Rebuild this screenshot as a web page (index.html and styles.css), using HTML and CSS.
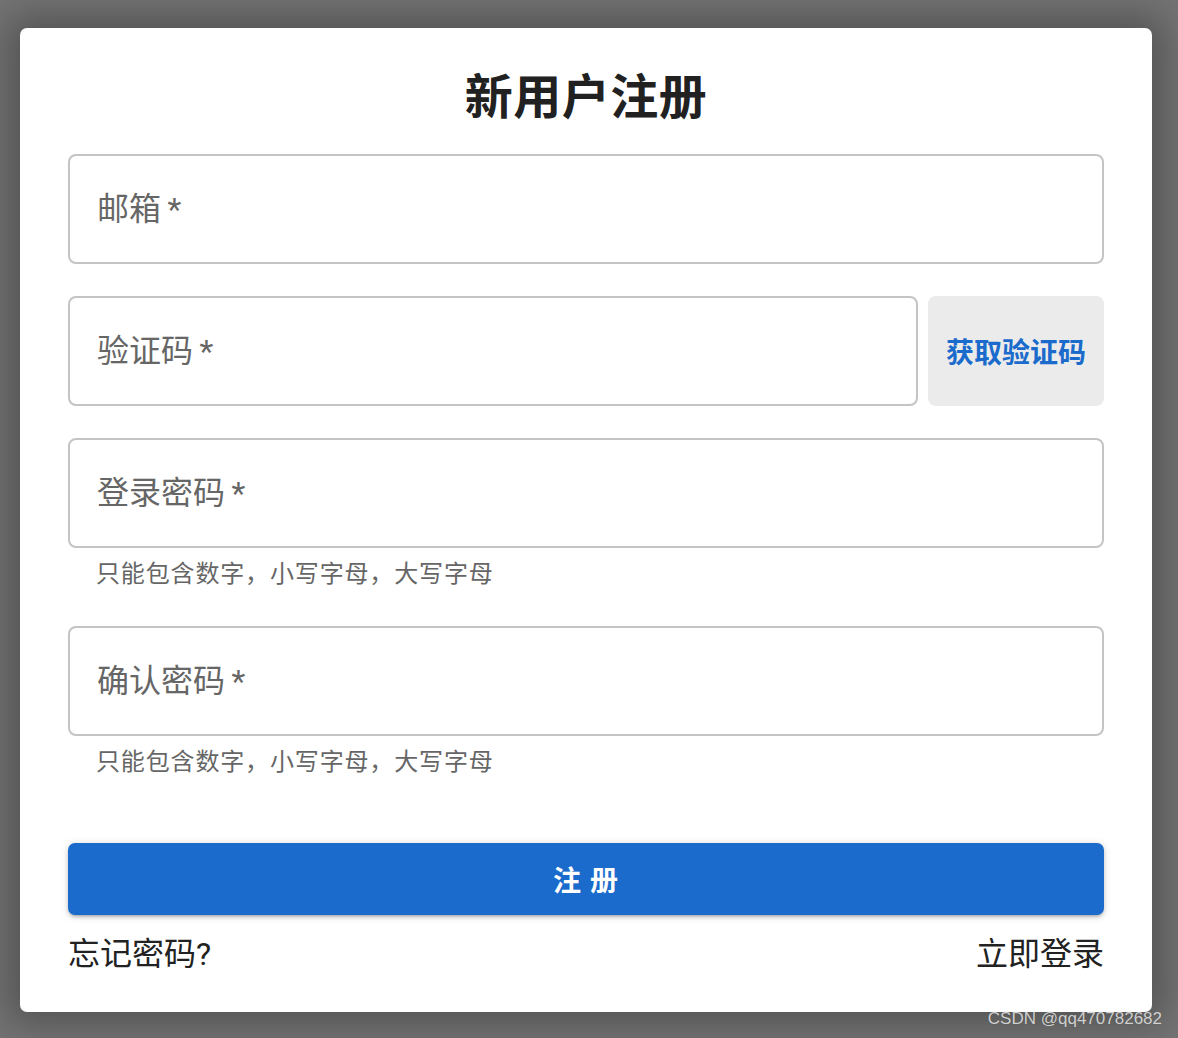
FILE: index.html
```html
<!DOCTYPE html>
<html lang="zh-CN">
<head>
<meta charset="utf-8">
<title>新用户注册</title>
<link rel="stylesheet" href="styles.css">
</head>
<body>
<div class="card">
  <h1 class="title">新用户注册</h1>
  <div class="field"><span class="label">邮箱&thinsp;*</span></div>
  <div class="row">
    <div class="field grow"><span class="label">验证码&thinsp;*</span></div>
    <button class="code-btn">获取验证码</button>
  </div>
  <div class="field"><span class="label">登录密码&thinsp;*</span></div>
  <div class="helper">只能包含数字，小写字母，大写字母</div>
  <div class="field"><span class="label">确认密码&thinsp;*</span></div>
  <div class="helper">只能包含数字，小写字母，大写字母</div>
  <button class="submit">注 册</button>
  <div class="links">
    <span class="link">忘记密码?</span>
    <span class="link">立即登录</span>
  </div>
</div>
<div class="watermark">CSDN @qq470782682</div>
</body>
</html>
```

FILE: styles.css
```css
html, body {
  margin: 0;
  padding: 0;
}
body {
  background: #737373;
  width: 1178px;
  height: 1038px;
  overflow: hidden;
  position: relative;
  font-family: Roboto, "Noto Sans CJK SC", sans-serif;
  padding-top: 28px;
  box-sizing: border-box;
}
.card {
  margin-left: 20px;
  width: 1132px;
  height: 984px;
  box-sizing: border-box;
  background: #fff;
  border-radius: 7px;
  padding: 42px 48px 0;
  display: flex;
  flex-direction: column;
  box-shadow: 0 0 36px 12px rgba(0, 0, 0, 0.28);
}
.title {
  margin: 0 0 28px;
  font-size: 48px;
  line-height: 56px;
  font-weight: 700;
  text-align: center;
  color: #212121;
  letter-spacing: 0.5px;
}
.field {
  height: 110px;
  box-sizing: border-box;
  border: 2px solid #c4c4c4;
  border-radius: 8px;
  display: flex;
  align-items: center;
  padding-left: 27px;
}
.row {
  display: flex;
  gap: 10px;
  margin-top: 32px;
}
.field + .field,
.row + .field {
  margin-top: 32px;
}
.grow {
  flex: 1;
}
.label {
  font-size: 32px;
  color: #666;
  line-height: 40px;
}
.code-btn {
  width: 176px;
  height: 110px;
  border: none;
  border-radius: 8px;
  background: #ebebeb;
  color: #1a6bcc;
  font-family: Roboto, "Noto Sans CJK SC", sans-serif;
  font-size: 28px;
  font-weight: 700;
  padding: 0;
}
.helper {
  margin: 6px 0 0 28px;
  font-size: 24px;
  line-height: 40px;
  color: #666;
  letter-spacing: 0.85px;
}
.helper + .field {
  margin-top: 32px;
}
.submit {
  margin-top: 61px;
  height: 72px;
  border: none;
  border-radius: 7px;
  background: #1a6bcc;
  color: #fff;
  font-family: Roboto, "Noto Sans CJK SC", sans-serif;
  font-size: 28px;
  font-weight: 700;
  letter-spacing: 1px;
  box-shadow: 0 3px 3px -2px rgba(0,0,0,0.2), 0 2px 4px 0 rgba(0,0,0,0.14), 0 1px 10px 0 rgba(0,0,0,0.12);
}
.links {
  margin-top: 15px;
  display: flex;
  justify-content: space-between;
}
.link {
  font-size: 32px;
  line-height: 48px;
  color: #222;
}
.watermark {
  position: absolute;
  right: 16px;
  bottom: 9px;
  font-family: "Liberation Sans", Arial, sans-serif;
  font-size: 17px;
  color: rgba(255, 255, 255, 0.75);
  text-shadow: 0 0 1px rgba(0,0,0,0.3);
}
```
